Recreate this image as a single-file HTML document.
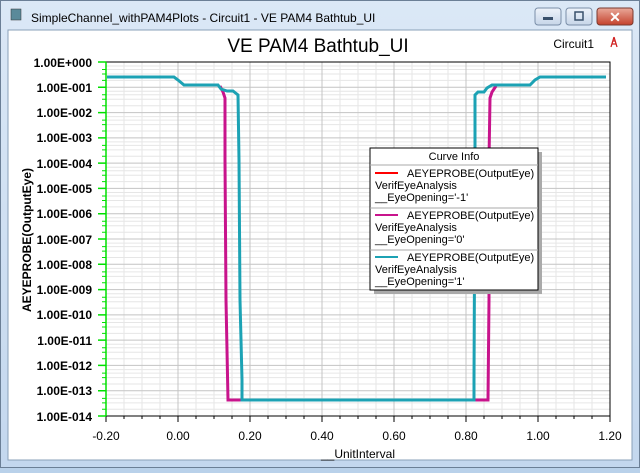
<!DOCTYPE html>
<html><head><style>
body{margin:0;width:640px;height:468px;overflow:hidden;background:#b9d1ea;font-family:"Liberation Sans",sans-serif}
</style></head><body>
<svg width="640" height="468" xmlns="http://www.w3.org/2000/svg" font-family="Liberation Sans, sans-serif">
<defs>
<linearGradient id="tb" x1="0" y1="0" x2="0" y2="1"><stop offset="0" stop-color="#dbe8f6"/><stop offset="1" stop-color="#c3d7ee"/></linearGradient>
<linearGradient id="btn" x1="0" y1="0" x2="0" y2="1"><stop offset="0" stop-color="#eef3fa"/><stop offset="1" stop-color="#c6d5e8"/></linearGradient>
<linearGradient id="cls" x1="0" y1="0" x2="0" y2="1"><stop offset="0" stop-color="#e9a99a"/><stop offset="1" stop-color="#c4412c"/></linearGradient>
</defs>
<rect x="0" y="0" width="640" height="468" fill="url(#tb)"/>
<rect x="0.5" y="0.5" width="639" height="467" fill="none" stroke="#6b7f96"/>
<rect x="11" y="9" width="10" height="11" fill="#5a8a9a" stroke="#333" stroke-width="0.5"/>
<text x="31" y="22" font-size="12" fill="#000">SimpleChannel_withPAM4Plots - Circuit1 - VE PAM4 Bathtub_UI</text>
<rect x="535" y="8" width="26" height="17" rx="3" fill="url(#btn)" stroke="#7a8ea8"/>
<rect x="543" y="17" width="10" height="3" fill="#39506b"/>
<rect x="566" y="8" width="26" height="17" rx="3" fill="url(#btn)" stroke="#7a8ea8"/>
<rect x="575" y="12" width="8" height="8" fill="none" stroke="#39506b" stroke-width="1.5"/>
<rect x="597" y="8" width="36" height="17" rx="3" fill="url(#cls)" stroke="#7a3a30"/>
<text x="615" y="22" font-size="14" font-weight="bold" fill="#fff" text-anchor="middle">✕</text>
<rect x="8" y="30" width="624" height="430" fill="#fff" stroke="#8aa0b8"/>
<text x="318" y="52" font-size="19" text-anchor="middle">VE PAM4 Bathtub_UI</text>
<text x="594" y="48" font-size="12" text-anchor="end">Circuit1</text>
<path d="M614 37 L611 47 M614 37 L617 47 M612 44 L616 44 M613 41 L615 41" stroke="#d02020" stroke-width="1.3" fill="none"/>
<g stroke="#e6e6e6">
<path d="
M106 80.4H610M106 74H610M106 69.5H610M106 66H610
M106 105.7H610M106 99.3H610M106 94.8H610M106 91.3H610
M106 131H610M106 124.6H610M106 120.1H610M106 116.6H610
M106 156.3H610M106 149.9H610M106 145.4H610M106 141.9H610
M106 181.6H610M106 175.2H610M106 170.7H610M106 167.2H610
M106 206.9H610M106 200.5H610M106 196H610M106 192.5H610
M106 232.2H610M106 225.8H610M106 221.3H610M106 217.8H610
M106 257.5H610M106 251.1H610M106 246.6H610M106 243.1H610
M106 282.8H610M106 276.4H610M106 271.9H610M106 268.4H610
M106 308.1H610M106 301.7H610M106 297.2H610M106 293.7H610
M106 333.4H610M106 327H610M106 322.5H610M106 319H610
M106 358.7H610M106 352.3H610M106 347.8H610M106 344.3H610
M106 384H610M106 377.6H610M106 373.1H610M106 369.6H610
M106 409.3H610M106 402.9H610M106 398.4H610M106 394.9H610
M124 62V416M142 62V416M160 62V416M196 62V416M214 62V416M232 62V416M268 62V416M286 62V416M304 62V416M340 62V416M358 62V416M376 62V416M412 62V416M430 62V416M448 62V416M484 62V416M502 62V416M520 62V416M556 62V416M574 62V416M592 62V416"/>
</g>
<g stroke="#c4c4c4">
<path d="M106 87.3H610M106 112.6H610M106 137.9H610M106 163.1H610M106 188.4H610M106 213.7H610M106 239H610M106 264.3H610M106 289.6H610M106 314.9H610M106 340.1H610M106 365.4H610M106 390.7H610
M178 62V416M250 62V416M322 62V416M394 62V416M466 62V416M538 62V416"/>
</g>
<rect x="106" y="62" width="504" height="354" fill="none" stroke="#000"/>
<g stroke="#000">
<path d="M106 416v6M124 416v3M142 416v3M160 416v3M178 416v6M196 416v3M214 416v3M232 416v3M250 416v6M268 416v3M286 416v3M304 416v3M322 416v6M340 416v3M358 416v3M376 416v3M394 416v6M412 416v3M430 416v3M448 416v3M466 416v6M484 416v3M502 416v3M520 416v3M538 416v6M556 416v3M574 416v3M592 416v3M610 416v6"/>
</g>
<g stroke="#00e000" stroke-width="1.5">
<path d="M106 62V416"/>
<path d="M98 62h8M98 87.3h8M98 112.6h8M98 137.9h8M98 163.1h8M98 188.4h8M98 213.7h8M98 239h8M98 264.3h8M98 289.6h8M98 314.9h8M98 340.1h8M98 365.4h8M98 390.7h8M98 416h8"/>
<path stroke-width="1" d="M102 69.5h4M102 74h4M102 80.4h4M102 94.8h4M102 99.3h4M102 105.7h4M102 120.1h4M102 124.6h4M102 131h4M102 145.4h4M102 149.9h4M102 156.3h4M102 170.7h4M102 175.2h4M102 181.6h4M102 196h4M102 200.5h4M102 206.9h4M102 221.3h4M102 225.8h4M102 232.2h4M102 246.6h4M102 251.1h4M102 257.5h4M102 271.9h4M102 276.4h4M102 282.8h4M102 297.2h4M102 301.7h4M102 308.1h4M102 322.5h4M102 327h4M102 333.4h4M102 347.8h4M102 352.3h4M102 358.7h4M102 373.1h4M102 377.6h4M102 384h4M102 398.4h4M102 402.9h4M102 409.3h4"/>
</g>
<g font-size="12" font-weight="bold" text-anchor="end" fill="#000">
<text x="92" y="67">1.00E+000</text><text x="92" y="92">1.00E-001</text><text x="92" y="117">1.00E-002</text><text x="92" y="142">1.00E-003</text><text x="92" y="168">1.00E-004</text><text x="92" y="193">1.00E-005</text><text x="92" y="218">1.00E-006</text><text x="92" y="244">1.00E-007</text><text x="92" y="269">1.00E-008</text><text x="92" y="294">1.00E-009</text><text x="92" y="319">1.00E-010</text><text x="92" y="345">1.00E-011</text><text x="92" y="370">1.00E-012</text><text x="92" y="395">1.00E-013</text><text x="92" y="421">1.00E-014</text>
</g>
<g font-size="12" text-anchor="middle" fill="#000">
<text x="106" y="440">-0.20</text><text x="178" y="440">0.00</text><text x="250" y="440">0.20</text><text x="322" y="440">0.40</text><text x="394" y="440">0.60</text><text x="466" y="440">0.80</text><text x="538" y="440">1.00</text><text x="610" y="440">1.20</text>
<text x="358" y="458">__UnitInterval</text>
</g>
<text transform="translate(31 240) rotate(-90)" font-size="12" font-weight="bold" text-anchor="middle">AEYEPROBE(OutputEye)</text>
<path d="M220 86 L223 92 L225 98 L225 160 L226 300 L228 400 L243 400" fill="none" stroke="#c8148c" stroke-width="3"/>
<path d="M474 400 L488 400 L489 300 L489 160 L490 98 L492 92 L496 86" fill="none" stroke="#c8148c" stroke-width="3"/>
<path d="M107 77 L174 77 L178 80 L184 85 L218 85 L221 89 L227 91 L233 91 L238 95 L239 160 L240 300 L242 380 L242 400 L474 400 L474 380 L475 160 L475 95 L478 92 L484 92 L487 88 L492 85 L530 85 L535 80 L540 77 L606 77" fill="none" stroke="#1ca2b4" stroke-width="3"/>
<rect x="374" y="152" width="168" height="142" fill="#aaa"/>
<rect x="370" y="148" width="168" height="142" fill="#fff" stroke="#000"/>
<text x="454" y="160" font-size="11" text-anchor="middle">Curve Info</text>
<line x1="370" y1="165" x2="538" y2="165" stroke="#aaa"/>
<line x1="370" y1="208" x2="538" y2="208" stroke="#aaa"/>
<line x1="370" y1="250" x2="538" y2="250" stroke="#aaa"/>
<g font-size="11" fill="#000">
<line x1="375" y1="173" x2="398" y2="173" stroke="#f00" stroke-width="2"/>
<text x="407" y="177">AEYEPROBE(OutputEye)</text><text x="375" y="189">VerifEyeAnalysis</text><text x="375" y="201">__EyeOpening='-1'</text>
<line x1="375" y1="215" x2="398" y2="215" stroke="#c8148c" stroke-width="2"/>
<text x="407" y="219">AEYEPROBE(OutputEye)</text><text x="375" y="231">VerifEyeAnalysis</text><text x="375" y="243">__EyeOpening='0'</text>
<line x1="375" y1="257" x2="398" y2="257" stroke="#1ca2b4" stroke-width="2"/>
<text x="407" y="261">AEYEPROBE(OutputEye)</text><text x="375" y="273">VerifEyeAnalysis</text><text x="375" y="285">__EyeOpening='1'</text>
</g>
</svg>
</body></html>
